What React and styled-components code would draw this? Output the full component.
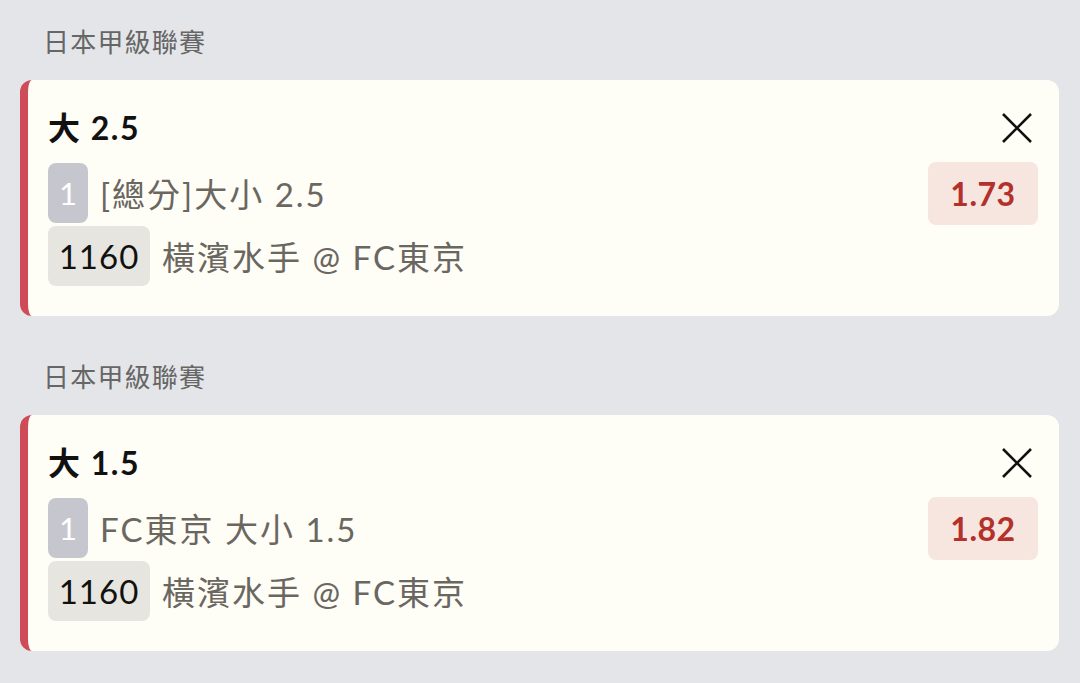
import React from 'react';
import styled, { createGlobalStyle } from 'styled-components';

const GlobalStyle = createGlobalStyle`
    html, body {
        margin: 0;
        padding: 0;
        background: #e4e5e8;
        font-family: Lato, "Noto Sans CJK TC", sans-serif;
    }
`;

const Page = styled.div`
    padding: 0 21px 0 20px;
    min-height: 683px;
    box-sizing: border-box;
`;

const Section = styled.section`
    padding-top: 24px;
    margin-bottom: 19px;
`;

const League = styled.div`
    margin: 0 0 20px 23px;
    height: 36px;
    line-height: 36px;
    font-size: 26px;
    letter-spacing: 1.2px;
    color: #666666;
`;

const Card = styled.div`
    display: flex;
    justify-content: space-between;
    height: 236px;
    box-sizing: border-box;
    padding: 28px 21px 30px 20px;
    background: #fefdf6;
    border-left: 8px solid #cf4b58;
    border-radius: 12px;
`;

const Main = styled.div`
    display: flex;
    flex-direction: column;
`;

const Title = styled.div`
    height: 40px;
    line-height: 40px;
    font-size: 32px;
    font-weight: 700;
    letter-spacing: 1.5px;
    color: #111111;
    margin-bottom: 15px;
`;

const Row = styled.div`
    display: flex;
    align-items: center;
    gap: 12px;
    height: 60px;
    & + & {
        margin-top: 3px;
    }
`;

const Badge = styled.span`
    display: inline-flex;
    align-items: center;
    justify-content: center;
    height: 60px;
    min-width: ${p => (p.$muted ? '40px' : '102px')};
    box-sizing: border-box;
    border-radius: 8px;
    font-size: ${p => (p.$muted ? '31px' : '33px')};
    letter-spacing: ${p => (p.$muted ? '0' : '1px')};
    background: ${p => (p.$muted ? '#c6c7ce' : '#e7e5df')};
    color: ${p => (p.$muted ? '#ffffff' : '#111111')};
`;

const Info = styled.span`
    font-size: 33px;
    letter-spacing: 2px;
    color: #6a6660;
    white-space: nowrap;
`;

const Side = styled.div`
    display: flex;
    flex-direction: column;
    align-items: flex-end;
`;

const Close = styled.button`
    display: flex;
    align-items: center;
    justify-content: center;
    width: 40px;
    height: 40px;
    padding: 0;
    margin-right: 1px;
    border: none;
    background: none;
    cursor: pointer;
`;

const Odds = styled.div`
    margin-top: 14px;
    width: 110px;
    height: 63px;
    display: flex;
    align-items: center;
    justify-content: center;
    border-radius: 8px;
    background: #f6e6df;
    color: #b3302b;
    font-size: 32px;
    font-weight: 700;
    letter-spacing: 0.5px;
`;

const bets = [
    { league: '日本甲級聯賽', title: '大 2.5', market: '[總分]大小 2.5', odds: '1.73' },
    { league: '日本甲級聯賽', title: '大 1.5', market: 'FC東京 大小 1.5', odds: '1.82' },
];

function CloseIcon() {
    return (
        <svg width="32" height="32" viewBox="0 0 32 32">
            <path d="M2 2L30 30M30 2L2 30" stroke="#111" strokeWidth="2.6" />
        </svg>
    );
}

export default function App() {
    return (
        <Page>
            <GlobalStyle />
            {bets.map((bet, i) => (
                <Section key={i}>
                    <League>{bet.league}</League>
                    <Card>
                        <Main>
                            <Title>{bet.title}</Title>
                            <Row>
                                <Badge $muted>1</Badge>
                                <Info>{bet.market}</Info>
                            </Row>
                            <Row>
                                <Badge>1160</Badge>
                                <Info>橫濱水手 @ FC東京</Info>
                            </Row>
                        </Main>
                        <Side>
                            <Close><CloseIcon /></Close>
                            <Odds>{bet.odds}</Odds>
                        </Side>
                    </Card>
                </Section>
            ))}
        </Page>
    );
}
